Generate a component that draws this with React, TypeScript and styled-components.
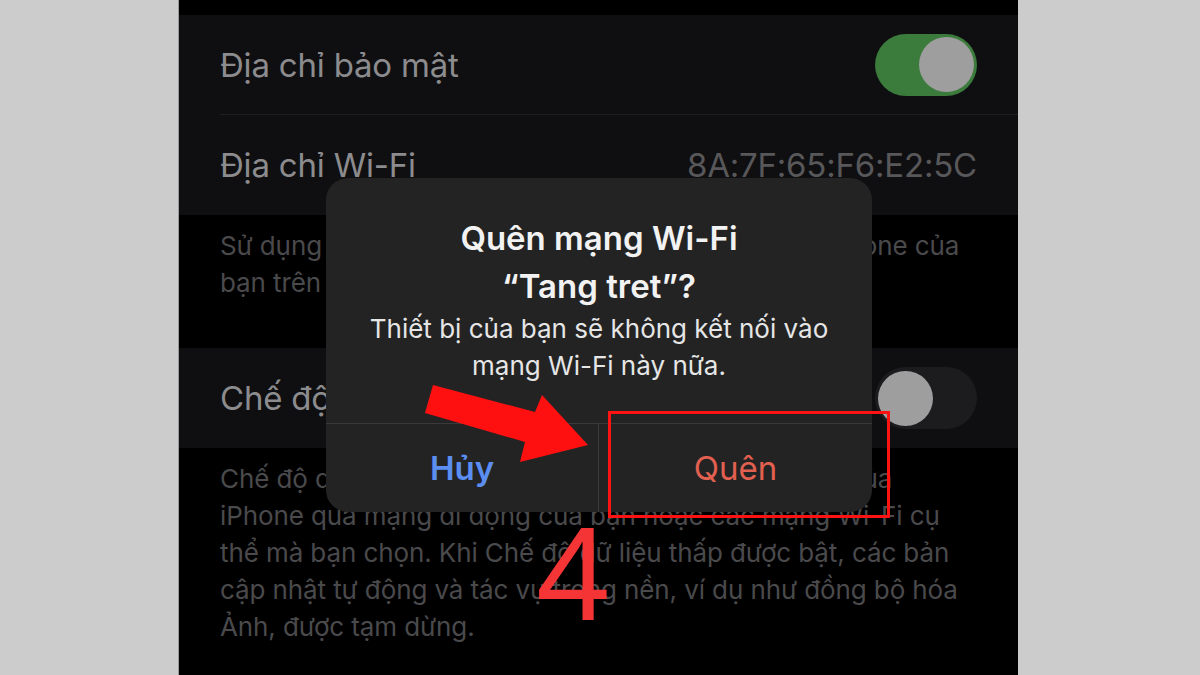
import React from "react";
import styled, { createGlobalStyle } from "styled-components";

const GlobalStyle = createGlobalStyle`
  html, body {
    margin: 0;
    padding: 0;
    background: #cccccc;
  }
  body {
    font-family: Inter, "Noto Sans", "Liberation Sans", sans-serif;
  }
`;

const Page = styled.div`
  position: relative;
  width: 1200px;
  height: 675px;
  display: flex;
  overflow: hidden;
  background: #cccccc;
`;

const Side = styled.div<{ left?: boolean }>`
  width: ${(props) => (props.left ? "178px" : "182px")};
  background: #cccccc;
  border-right: ${(props) => (props.left ? "1px solid #9a9a9a" : "none")};
`;

const Phone = styled.div`
  position: relative;
  flex: 1;
  background: #000;
  padding-top: 15px;
  display: flex;
  flex-direction: column;
  overflow: hidden;
`;

const Group = styled.div`
  background: #0f0f11;
`;

const Row = styled.div<{ divider?: boolean }>`
  height: 100px;
  display: flex;
  align-items: center;
  justify-content: space-between;
  margin-left: 41px;
  padding-right: 41px;
  border-bottom: ${(props) => (props.divider ? "1px solid #1e1e20" : "none")};
  box-sizing: border-box;
`;

const Label = styled.span`
  font-size: 33px;
  color: #8c8c8e;
  letter-spacing: -0.2px;
`;

const Value = styled.span`
  font-size: 33px;
  color: #58585a;
  letter-spacing: -0.2px;
`;

const Toggle = styled.div<{ on?: boolean }>`
  width: 102px;
  height: 62px;
  border-radius: 31px;
  background: ${(props) => (props.on ? "#3b7b3c" : "#1c1c1e")};
  display: flex;
  align-items: center;
  justify-content: ${(props) => (props.on ? "flex-end" : "flex-start")};
  padding: 0 3px;
  box-sizing: border-box;
`;

const Knob = styled.div`
  width: 55px;
  height: 55px;
  border-radius: 50%;
  background: #9e9e9e;
`;

const Footer = styled.p<{ gap: number }>`
  margin: 12px 0 ${(props) => props.gap}px 41px;
  font-size: 26px;
  line-height: 37px;
  color: #4a4a4c;
  letter-spacing: -0.1px;
  white-space: nowrap;
`;

const Dialog = styled.div`
  position: absolute;
  left: 147px;
  top: 178px;
  width: 546px;
  height: 334px;
  border-radius: 22px;
  background: #232324;
  display: flex;
  flex-direction: column;
  overflow: hidden;
`;

const DialogBody = styled.div`
  flex: 1;
  padding-top: 36px;
  text-align: center;
`;

const Title = styled.h2`
  margin: 0;
  font-size: 33px;
  line-height: 48px;
  font-weight: 600;
  color: #f2f2f2;
`;

const Message = styled.p`
  margin: 0;
  font-size: 26px;
  line-height: 37px;
  color: #e6e6e6;
`;

const Actions = styled.div`
  height: 88px;
  display: grid;
  grid-template-columns: 272px 1fr;
  border-top: 1px solid #3a3a3c;
`;

const Action = styled.div<{ tone: "cancel" | "danger" }>`
  display: flex;
  align-items: center;
  justify-content: center;
  font-size: 33px;
  font-weight: ${(props) => (props.tone === "cancel" ? 600 : 400)};
  color: ${(props) => (props.tone === "cancel" ? "#5b8ef0" : "#e2604f")};
  border-left: ${(props) => (props.tone === "danger" ? "1px solid #3a3a3c" : "none")};
`;

const Highlight = styled.div`
  position: absolute;
  left: 608px;
  top: 411px;
  width: 282px;
  height: 107px;
  border: 3px solid #ff1212;
  box-sizing: border-box;
`;

const Arrow = styled.svg`
  position: absolute;
  left: 0;
  top: 0;
  pointer-events: none;
`;

const StepNumber = styled.div`
  position: absolute;
  left: 536px;
  top: 502px;
  font-family: "Liberation Sans", Arial, sans-serif;
  font-size: 134px;
  line-height: 144px;
  font-weight: 400;
  color: #f53535;
`;

export default function App() {
  return (
    <>
      <GlobalStyle />
      <Page>
        <Side left />
        <Phone>
          <Group>
            <Row divider>
              <Label>Địa chỉ bảo mật</Label>
              <Toggle on>
                <Knob />
              </Toggle>
            </Row>
            <Row>
              <Label>Địa chỉ Wi-Fi</Label>
              <Value>8A:7F:65:F6:E2:5C</Value>
            </Row>
          </Group>
          <Footer gap={47}>
            Sử dụng địa chỉ bảo mật giúp giảm thiểu theo dõi iPhone của
            <br />
            bạn trên các mạng Wi-Fi khác nhau.
          </Footer>
          <Group>
            <Row>
              <Label>Chế độ dữ liệu thấp</Label>
              <Toggle>
                <Knob />
              </Toggle>
            </Row>
          </Group>
          <Footer gap={0}>
            Chế độ dữ liệu thấp giúp giảm mức sử dụng dữ liệu của
            <br />
            iPhone qua mạng di động của bạn hoặc các mạng Wi-Fi cụ
            <br />
            thể mà bạn chọn. Khi Chế độ dữ liệu thấp được bật, các bản
            <br />
            cập nhật tự động và tác vụ trong nền, ví dụ như đồng bộ hóa
            <br />
            Ảnh, được tạm dừng.
          </Footer>
          <Dialog>
            <DialogBody>
              <Title>
                Quên mạng Wi-Fi
                <br />
                “Tang tret”?
              </Title>
              <Message>
                Thiết bị của bạn sẽ không kết nối vào
                <br />
                mạng Wi-Fi này nữa.
              </Message>
            </DialogBody>
            <Actions>
              <Action tone="cancel">Hủy</Action>
              <Action tone="danger">Quên</Action>
            </Actions>
          </Dialog>
        </Phone>
        <Side />
        <Highlight />
        <Arrow width="1200" height="675" viewBox="0 0 1200 675">
          <polygon
            points="433,385 535,412 542,395 588,445 520,462 525,442 425,413"
            fill="#ff1010"
          />
        </Arrow>
        <StepNumber>4</StepNumber>
      </Page>
    </>
  );
}
